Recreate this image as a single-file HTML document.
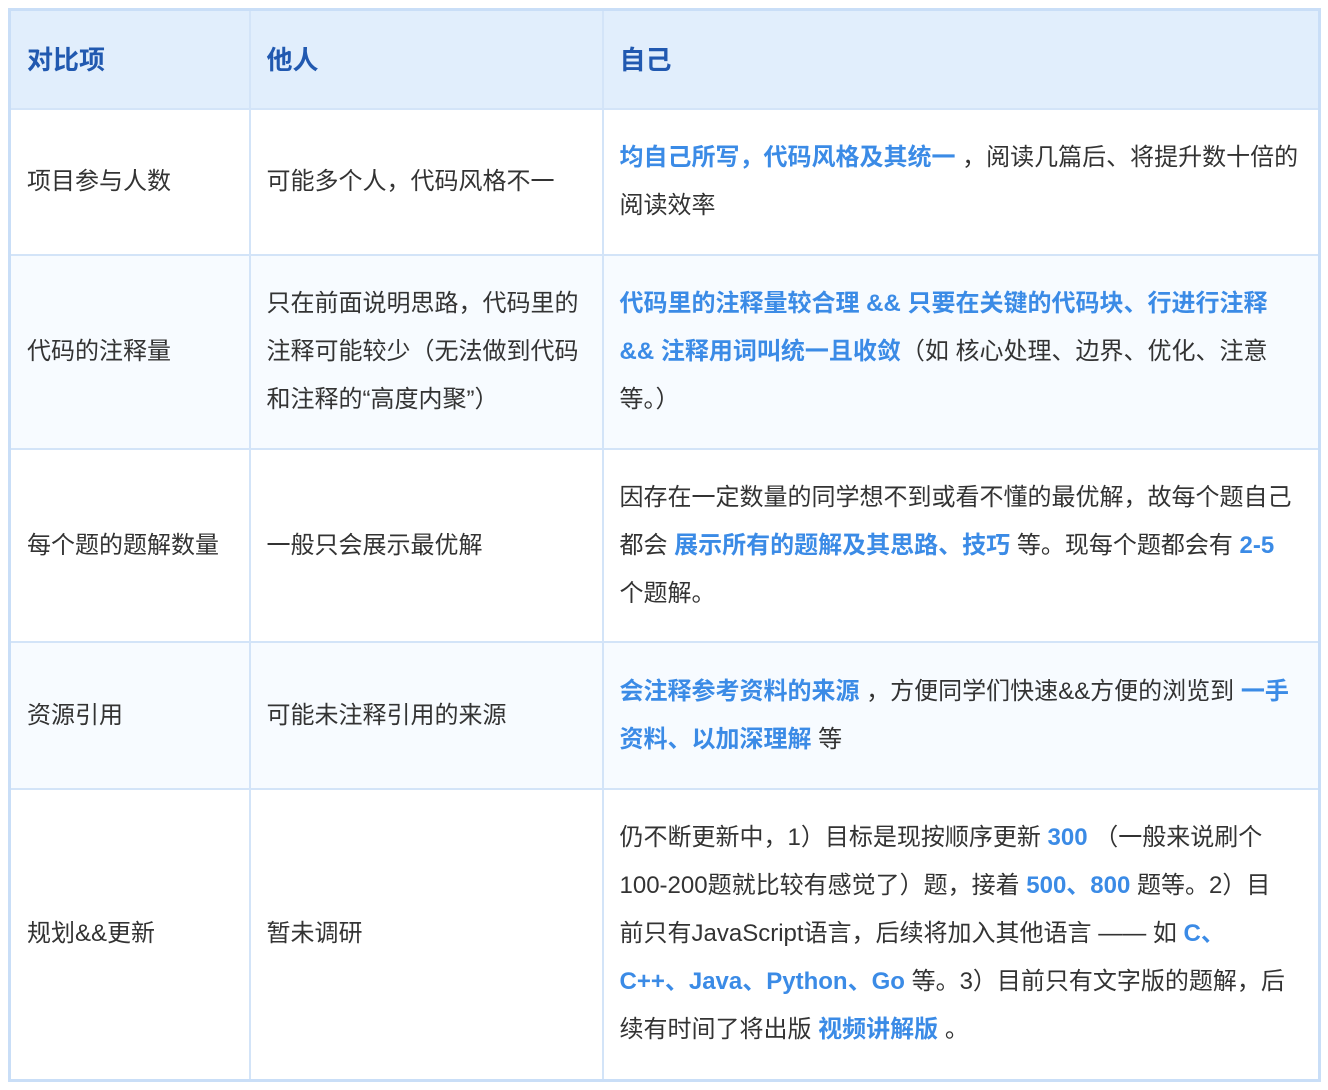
<!DOCTYPE html>
<html><head><meta charset="utf-8">
<style>
html,body{margin:0;padding:0;background:#fff;width:1328px;height:1090px;overflow:hidden}
body{font-family:"Liberation Sans","Noto Sans CJK SC",sans-serif;color:#333;}
table{position:absolute;left:8px;top:8px;width:1313px;border-collapse:collapse;table-layout:fixed;border:3px solid #c9def7}
td,th{border:2px solid #d3e4f8;padding:0 0 0 16px;font-size:24px;line-height:48px;text-align:left;vertical-align:middle;white-space:nowrap}
th{background:#e1eefc;color:#2159b0;font-weight:bold;font-size:26px;height:97px}
tr.alt td{background:#f7fbff}
b{color:#3b8be6;font-weight:bold}
</style></head><body>
<table>
<colgroup><col style="width:240px"><col style="width:353px"><col></colgroup>
<tr><th>对比项</th><th>他人</th><th>自己</th></tr>
<tr style="height:146px"><td>项目参与人数</td><td>可能多个人，代码风格不一</td><td><b>均自己所写，代码风格及其统一</b> ，阅读几篇后、将提升数十倍的<br>阅读效率</td></tr>
<tr class="alt" style="height:194px"><td>代码的注释量</td><td>只在前面说明思路，代码里的<br>注释可能较少（无法做到代码<br>和注释的“高度内聚”）</td><td><b>代码里的注释量较合理 &amp;&amp; 只要在关键的代码块、行进行注释<br>&amp;&amp; 注释用词叫统一且收敛</b>（如 核心处理、边界、优化、注意<br>等。）</td></tr>
<tr style="height:193px"><td>每个题的题解数量</td><td>一般只会展示最优解</td><td>因存在一定数量的同学想不到或看不懂的最优解，故每个题自己<br>都会 <b>展示所有的题解及其思路、技巧</b> 等。现每个题都会有 <b>2-5</b><br>个题解。</td></tr>
<tr class="alt" style="height:147px"><td>资源引用</td><td>可能未注释引用的来源</td><td><b>会注释参考资料的来源</b> ，方便同学们快速&amp;&amp;方便的浏览到 <b>一手<br>资料、以加深理解</b> 等</td></tr>
<tr style="height:291px"><td>规划&amp;&amp;更新</td><td>暂未调研</td><td>仍不断更新中，1）目标是现按顺序更新 <b>300</b> （一般来说刷个<br>100-200题就比较有感觉了）题，接着 <b>500、800</b> 题等。2）目<br>前只有JavaScript语言，后续将加入其他语言 —— 如 <b>C、<br>C++、Java、Python、Go</b> 等。3）目前只有文字版的题解，后<br>续有时间了将出版 <b>视频讲解版</b> 。</td></tr>
</table>
</body></html>
